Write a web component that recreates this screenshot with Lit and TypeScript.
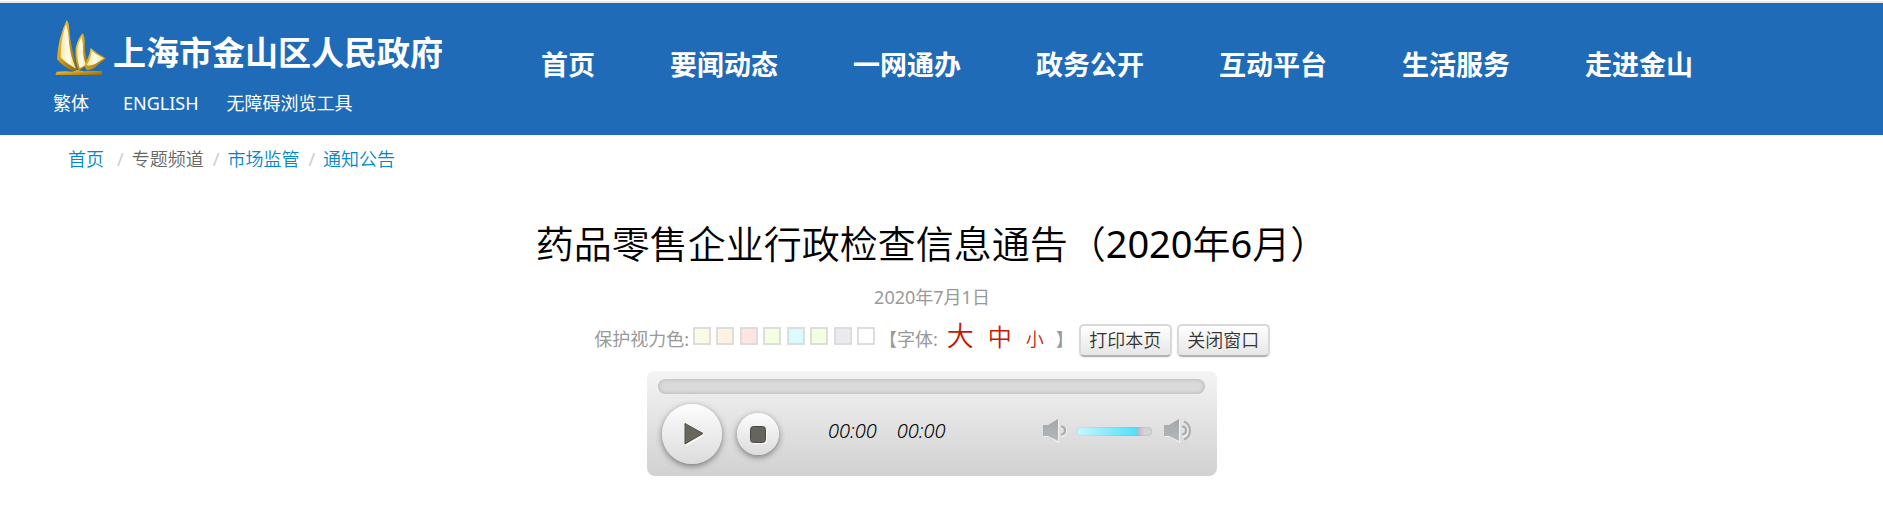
import { LitElement, html, css, svg } from "lit";
import { customElement, state } from "lit/decorators.js";

const NAV = ["首页", "要闻动态", "一网通办", "政务公开", "互动平台", "生活服务", "走进金山"];
const TINTS = [
  ["米黄", "#fafbe6"], ["杏色", "#fff2e2"], ["粉红", "#fde6e0"], ["浅绿", "#f3ffe1"],
  ["天蓝", "#dafafe"], ["草绿", "#f3ffe1"], ["灰紫", "#eaeaef"], ["白色", "#ffffff"],
];

const sails = svg`
  <defs>
    <linearGradient id="gold" x1="0" y1="0" x2="1" y2="1">
      <stop offset="0" stop-color="#f3d860"/><stop offset=".5" stop-color="#c99a1c"/><stop offset="1" stop-color="#8a6508"/>
    </linearGradient>
    <linearGradient id="cream" x1="0" y1="0" x2="1" y2="0">
      <stop offset="0" stop-color="#f7e9a0"/><stop offset=".5" stop-color="#fffdf0"/><stop offset="1" stop-color="#f0dc80"/>
    </linearGradient>
  </defs>
  <path fill="url(#gold)" d="M68 29Q75 34 76 58Q78 90 88 130Q94 160 102 178L84 180Q58 168 39 146Q42 82 68 29Z"/>
  <path fill="url(#cream)" d="M66 42Q74 62 75 98Q80 140 96 174Q64 156 50 140Q50 84 66 42Z"/>
  <path fill="url(#gold)" d="M116 68Q124 78 122 108Q124 140 134 160L118 172L104 180Q92 150 95 112Q102 82 116 68Z"/>
  <path fill="url(#cream)" d="M113 80Q118 100 117 120Q118 145 127 162L107 173Q97 140 100 112Q104 92 113 80Z"/>
  <path fill="url(#gold)" d="M140 112L158 126L187 143Q168 156 154 170Q142 181 128 178Q118 168 128 150Q138 132 140 112Z"/>
  <path fill="url(#cream)" d="M143 121L157 131L181 143L153 160Q138 167 128 163Q140 145 143 121Z"/>
  <path fill="url(#gold)" d="M38 183Q65 180 85 183L100 178L120 182Q150 180 174 182L174 193H34Z"/>`;

@customElement("app-root")
export class AppRoot extends LitElement {
  static styles = css`
    :host { display: block; min-height: 100vh; background: #fff; color: #333;
      font: 350 18px/24px "Noto Sans", "Noto Sans CJK SC", sans-serif; }
    a { color: inherit; text-decoration: none; }
    .header { display: flex; align-items: flex-start; margin-top: 1px; height: 132px; border-top: 2px solid #e6e6ec;
      background: #206bb7; color: #fff; }
    .brand { flex: none; padding: 14px 0 0 53px; width: 541px; box-sizing: border-box; }
    .logo { display: flex; align-items: center; gap: 5px; height: 62px; font-size: 33px; font-weight: 700;
      line-height: 48px; font-family: "Noto Sans CJK SC", sans-serif; }
    .logo svg { width: 55px; height: 60px; }
    .logo span { padding-top: 6px; }
    .tools { display: flex; gap: 28px; margin-top: 12px; font-weight: 400; }
    .tools a:first-child { margin-right: 6px; }
    .nav { display: flex; gap: 75px; padding-top: 42px; font-size: 27px; font-weight: 700; line-height: 40px; white-space: nowrap; }
    .crumbs { display: flex; list-style: none; margin: 0; padding: 12px 0 0 68px; color: #666; }
    .crumbs a { color: #0088cc; }
    .crumbs li + li::before { content: "/"; color: #ccc; font-weight: 400; padding: 0 8px 0 9px; }
    .crumbs li:first-child { margin-right: 4px; }
    .article { display: flex; flex-direction: column; align-items: center; padding: 0 19px 0 0; color: #999; }
    h1 { margin: 46px 0 0; font-size: 38px; line-height: 52px; font-weight: 350; color: #000; }
    .num { font-weight: 400; }
    .date { margin-top: 16px; font-weight: 400; }
    .options { display: flex; align-items: center; margin-top: 14px; height: 34px; font-weight: 400; }
    .label { padding-bottom: 2px; }
    .tints { display: flex; justify-content: space-between; width: 182px; margin: 0 4px 8px 4px; }
    .tint { width: 18px; height: 18px; padding: 0; border: 2px solid #ddd; }
    .sizes { display: flex; align-items: baseline; padding-bottom: 6px; }
    .sizes a { color: #c81800; font-weight: 350; margin-left: 14px; }
    .sizes .large { font-size: 27px; margin-left: 9px; }
    .sizes .medium { font-size: 24px; }
    .sizes .end { margin-left: 12px; }
    .btn { box-sizing: border-box; width: 93px; height: 33px; margin-left: 5px; padding: 0; font: inherit; font-weight: 350; color: #333;
      border: 2px solid #d9d9d9; border-bottom-color: #b3b3b3; border-radius: 5px;
      background: linear-gradient(#fff, #e6e6e6); box-shadow: 0 1px 2px rgba(0,0,0,.08); }
    .player { box-sizing: border-box; width: 570px; max-width: 100%; height: 105px; margin-top: 14px; padding: 8px 12px 0 11px;
      border-radius: 8px; background: linear-gradient(#f4f4f4, #d1d1d1); color: #000; }
    input { appearance: none; display: block; margin: 0; }
    .seek { width: 100%; height: 15px; border-radius: 8px; background: #dadada; box-shadow: inset 0 0 4px rgba(0,0,0,.2); }
    .seek::-webkit-slider-thumb, .volume::-webkit-slider-thumb { appearance: none; width: 1px; height: 1px; background: transparent; }
    .controls { display: flex; align-items: center; height: 80px; padding-left: 4px; }
    .round { display: grid; place-items: center; width: 60px; height: 60px; padding: 0; border: 0; border-radius: 50%;
      background: linear-gradient(#fdfdfd, #dcdcdc); box-shadow: 0 2px 6px rgba(0,0,0,.45); }
    .play svg { margin-left: 4px; }
    .stop { width: 42px; height: 42px; margin-left: 15px; }
    .times { display: flex; gap: 20px; margin: 0 auto 0 49px; font-size: 20px; font-style: italic; padding-bottom: 6px; }
    .sound { display: flex; align-items: center; padding: 0 14px 6px 0; }
    .volume { width: 75px; height: 9px; border-radius: 4px; margin: 0 12px 0 7px;
      background: linear-gradient(90deg, #c8f7ff, #50e0ff) 0 0 / var(--level) 100% no-repeat, linear-gradient(90deg, #b5b5c5 80%, #d4d4d4 90%);
      box-shadow: inset 0 0 2px rgba(0,0,0,.2); }
  `;

  @state() private volume = 80;
  @state() private tint = "#ffffff";
  @state() private playing = false;

  private speaker(loud: boolean) {
    return html`<svg width="27" height="24" viewBox="0 0 27 24" aria-hidden="true">
      <defs><linearGradient id="metal" x1="0" y1="0" x2="0" y2="1"><stop stop-color="#a3a7a9"/><stop offset="1" stop-color="#b5b8ba"/></linearGradient></defs>
      <path fill="#f2f2f2" d="M1 7H6L16 1V24L6 18H1Z"/>
      <path fill="url(#metal)" d="M0 6H5L15 0V22L5 17H0Z"/>
      <path d="M18.500 8Q23 8 23 12.500T18.500 17" fill="none" stroke="#f2f2f2" stroke-width="2"/>
      <path d="M18 7.500Q22 7.500 22 11.500T18 15.500" fill="none" stroke="#a9adaf" stroke-width="2.200"/>
      ${loud ? svg`<path d="M20 2.500Q26 5 26 11.500T20 20.500" fill="none" stroke="#a9adaf" stroke-width="2"/>` : ""}
    </svg>`;
  }

  render() {
    return html`
      <header class="header">
        <div class="brand">
          <a class="logo" href="#"><svg viewBox="27 22 165 180" aria-hidden="true">${sails}</svg><span>上海市金山区人民政府</span></a>
          <div class="tools"><a href="#">繁体</a><a href="#">ENGLISH</a><a href="#">无障碍浏览工具</a></div>
        </div>
        <nav class="nav">${NAV.map((n) => html`<a href="#">${n}</a>`)}</nav>
      </header>
      <ol class="crumbs">
        <li><a href="#">首页</a></li><li>专题频道</li><li><a href="#">市场监管</a></li><li><a href="#">通知公告</a></li>
      </ol>
      <main class="article" style="background:${this.tint}">
        <h1>药品零售企业行政检查信息通告（<span class="num">2020</span>年<span class="num">6</span>月）</h1>
        <div class="date">2020年7月1日</div>
        <div class="options">
          <span class="label">保护视力色:</span>
          <div class="tints">${TINTS.map(([name, c]) => html`<button class="tint" aria-label=${name} style="background:${c}" @click=${() => (this.tint = c)}></button>`)}</div>
          <div class="sizes"><span>【字体:</span><a class="large" href="#">大</a><a class="medium" href="#">中</a><a href="#">小</a><span class="end">】</span></div>
          <button class="btn" @click=${() => window.print()}>打印本页</button>
          <button class="btn">关闭窗口</button>
        </div>
        <section class="player" aria-label="语音播放">
          <input class="seek" type="range" aria-label="播放进度" min="0" max="100" value="0" />
          <div class="controls">
            <button class="round play" aria-label="播放" aria-pressed=${this.playing} @click=${() => (this.playing = !this.playing)}>
              <svg width="22" height="26" viewBox="0 0 22 26"><path d="M3 4L22 14L3 25Z" fill="#fff"/><path d="M2 2.500L20 12.500L2 23Z" fill="#69665c" stroke="#504e47"/></svg>
            </button>
            <button class="round stop" aria-label="停止" @click=${() => (this.playing = false)}>
              <svg width="18" height="20" viewBox="0 0 18 20"><rect x="3" y="4" width="15" height="16" rx="3" fill="#fff"/><rect x="1.500" y="2.500" width="15" height="16" rx="3" fill="#66645f" stroke="#494843"/></svg>
            </button>
            <div class="times"><span>00:00</span><span>00:00</span></div>
            <div class="sound">
              ${this.speaker(false)}
              <input class="volume" type="range" aria-label="音量" min="0" max="100" .value=${String(this.volume)} style="--level:${this.volume}%"
                @input=${(e: Event) => (this.volume = Number((e.target as HTMLInputElement).value))} />
              ${this.speaker(true)}
            </div>
          </div>
        </section>
      </main>`;
  }
}
